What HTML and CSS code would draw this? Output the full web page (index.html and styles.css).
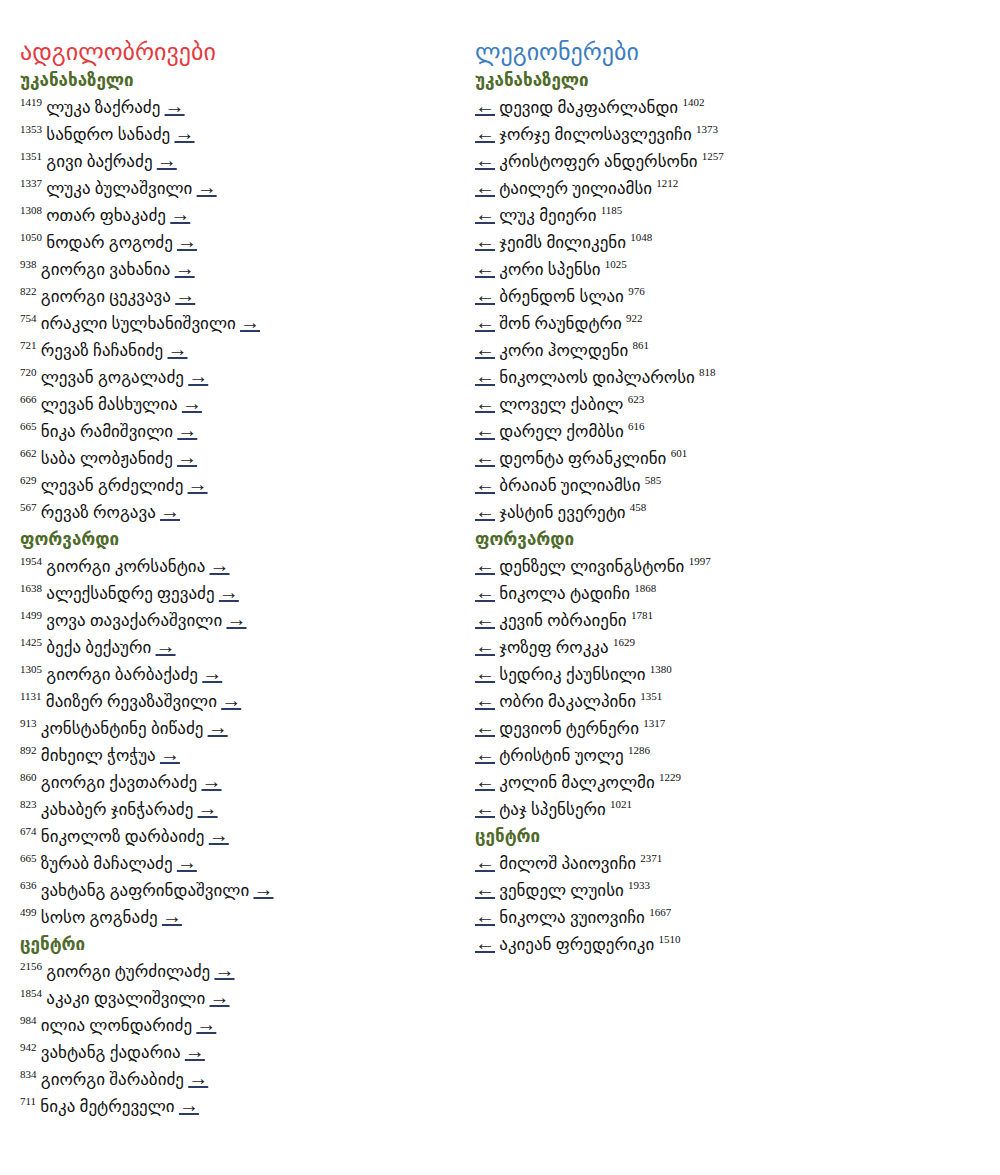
FILE: index.html
```html
<!DOCTYPE html>
<html lang="ka">
<head>
  <meta charset="UTF-8">
  <title>ადგილობრივები და ლეგიონერები</title>
  <link rel="stylesheet" href="styles.css">
</head>
<body>
  <div class="roster">
    <div class="column">
      <h2 class="title title-local">ადგილობრივები</h2>

      <h3 class="position">უკანახაზელი</h3>
      <ul class="players">
        <li><sup>1419</sup> ლუკა ზაქრაძე <a href="#">→</a></li>
        <li><sup>1353</sup> სანდრო სანაძე <a href="#">→</a></li>
        <li><sup>1351</sup> გივი ბაქრაძე <a href="#">→</a></li>
        <li><sup>1337</sup> ლუკა ბულაშვილი <a href="#">→</a></li>
        <li><sup>1308</sup> ოთარ ფხაკაძე <a href="#">→</a></li>
        <li><sup>1050</sup> ნოდარ გოგოძე <a href="#">→</a></li>
        <li><sup>938</sup> გიორგი ვახანია <a href="#">→</a></li>
        <li><sup>822</sup> გიორგი ცეკვავა <a href="#">→</a></li>
        <li><sup>754</sup> ირაკლი სულხანიშვილი <a href="#">→</a></li>
        <li><sup>721</sup> რევაზ ჩაჩანიძე <a href="#">→</a></li>
        <li><sup>720</sup> ლევან გოგალაძე <a href="#">→</a></li>
        <li><sup>666</sup> ლევან მასხულია <a href="#">→</a></li>
        <li><sup>665</sup> ნიკა რამიშვილი <a href="#">→</a></li>
        <li><sup>662</sup> საბა ლობჟანიძე <a href="#">→</a></li>
        <li><sup>629</sup> ლევან გრძელიძე <a href="#">→</a></li>
        <li><sup>567</sup> რევაზ როგავა <a href="#">→</a></li>
      </ul>

      <h3 class="position">ფორვარდი</h3>
      <ul class="players">
        <li><sup>1954</sup> გიორგი კორსანტია <a href="#">→</a></li>
        <li><sup>1638</sup> ალექსანდრე ფევაძე <a href="#">→</a></li>
        <li><sup>1499</sup> ვოვა თავაქარაშვილი <a href="#">→</a></li>
        <li><sup>1425</sup> ბექა ბექაური <a href="#">→</a></li>
        <li><sup>1305</sup> გიორგი ბარბაქაძე <a href="#">→</a></li>
        <li><sup>1131</sup> მაიზერ რევაზაშვილი <a href="#">→</a></li>
        <li><sup>913</sup> კონსტანტინე ბიწაძე <a href="#">→</a></li>
        <li><sup>892</sup> მიხეილ ჭოჭუა <a href="#">→</a></li>
        <li><sup>860</sup> გიორგი ქავთარაძე <a href="#">→</a></li>
        <li><sup>823</sup> კახაბერ ჯინჭარაძე <a href="#">→</a></li>
        <li><sup>674</sup> ნიკოლოზ დარბაიძე <a href="#">→</a></li>
        <li><sup>665</sup> ზურაბ მაჩალაძე <a href="#">→</a></li>
        <li><sup>636</sup> ვახტანგ გაფრინდაშვილი <a href="#">→</a></li>
        <li><sup>499</sup> სოსო გოგნაძე <a href="#">→</a></li>
      </ul>

      <h3 class="position">ცენტრი</h3>
      <ul class="players">
        <li><sup>2156</sup> გიორგი ტურძილაძე <a href="#">→</a></li>
        <li><sup>1854</sup> აკაკი დვალიშვილი <a href="#">→</a></li>
        <li><sup>984</sup> ილია ლონდარიძე <a href="#">→</a></li>
        <li><sup>942</sup> ვახტანგ ქადარია <a href="#">→</a></li>
        <li><sup>834</sup> გიორგი შარაბიძე <a href="#">→</a></li>
        <li><sup>711</sup> ნიკა მეტრეველი <a href="#">→</a></li>
      </ul>
    </div>

    <div class="column">
      <h2 class="title title-legion">ლეგიონერები</h2>

      <h3 class="position">უკანახაზელი</h3>
      <ul class="players">
        <li><a href="#">←</a> დევიდ მაკფარლანდი <sup>1402</sup></li>
        <li><a href="#">←</a> ჯორჯე მილოსავლევიჩი <sup>1373</sup></li>
        <li><a href="#">←</a> კრისტოფერ ანდერსონი <sup>1257</sup></li>
        <li><a href="#">←</a> ტაილერ უილიამსი <sup>1212</sup></li>
        <li><a href="#">←</a> ლუკ მეიერი <sup>1185</sup></li>
        <li><a href="#">←</a> ჯეიმს მილიკენი <sup>1048</sup></li>
        <li><a href="#">←</a> კორი სპენსი <sup>1025</sup></li>
        <li><a href="#">←</a> ბრენდონ სლაი <sup>976</sup></li>
        <li><a href="#">←</a> შონ რაუნდტრი <sup>922</sup></li>
        <li><a href="#">←</a> კორი ჰოლდენი <sup>861</sup></li>
        <li><a href="#">←</a> ნიკოლაოს დიპლაროსი <sup>818</sup></li>
        <li><a href="#">←</a> ლოველ ქაბილ <sup>623</sup></li>
        <li><a href="#">←</a> დარელ ქომბსი <sup>616</sup></li>
        <li><a href="#">←</a> დეონტა ფრანკლინი <sup>601</sup></li>
        <li><a href="#">←</a> ბრაიან უილიამსი <sup>585</sup></li>
        <li><a href="#">←</a> ჯასტინ ევერეტი <sup>458</sup></li>
      </ul>

      <h3 class="position">ფორვარდი</h3>
      <ul class="players">
        <li><a href="#">←</a> დენზელ ლივინგსტონი <sup>1997</sup></li>
        <li><a href="#">←</a> ნიკოლა ტადიჩი <sup>1868</sup></li>
        <li><a href="#">←</a> კევინ ობრაიენი <sup>1781</sup></li>
        <li><a href="#">←</a> ჯოზეფ როკკა <sup>1629</sup></li>
        <li><a href="#">←</a> სედრიკ ქაუნსილი <sup>1380</sup></li>
        <li><a href="#">←</a> ობრი მაკალპინი <sup>1351</sup></li>
        <li><a href="#">←</a> დევიონ ტერნერი <sup>1317</sup></li>
        <li><a href="#">←</a> ტრისტინ უოლე <sup>1286</sup></li>
        <li><a href="#">←</a> კოლინ მალკოლმი <sup>1229</sup></li>
        <li><a href="#">←</a> ტაჯ სპენსერი <sup>1021</sup></li>
      </ul>

      <h3 class="position">ცენტრი</h3>
      <ul class="players">
        <li><a href="#">←</a> მილოშ პაიოვიჩი <sup>2371</sup></li>
        <li><a href="#">←</a> ვენდელ ლუისი <sup>1933</sup></li>
        <li><a href="#">←</a> ნიკოლა ვუიოვიჩი <sup>1667</sup></li>
        <li><a href="#">←</a> აკიეან ფრედერიკი <sup>1510</sup></li>
      </ul>
    </div>
  </div>
</body>
</html>
```

FILE: styles.css
```css
body {
  font-family: 'Liberation Serif', 'DejaVu Sans', serif;
  font-size: 17px;
  color: #111;
  background-color: #fff;
  margin: 0;
  padding: 37px 20px 20px;
}

.roster {
  display: grid;
  grid-template-columns: 455px 1fr;
}

.title {
  font-size: 24px;
  font-weight: normal;
  line-height: 30px;
  margin: 0;
}

.title-local {
  color: #e43b3f;
}

.title-legion {
  color: #3b7dc0;
}

.position {
  font-size: 17px;
  font-weight: bold;
  color: #4f6b2b;
  line-height: 27px;
  margin: 0;
}

.players {
  list-style-type: none;
  margin: 0;
  padding: 0;
}

.players li {
  line-height: 27px;
}

.players sup {
  font-size: 11px;
  line-height: 0;
}

.players a {
  font-family: 'Liberation Sans', sans-serif;
  font-size: 20px;
  line-height: 0;
  color: #222;
  text-decoration-color: #2c3a66;
}
```
